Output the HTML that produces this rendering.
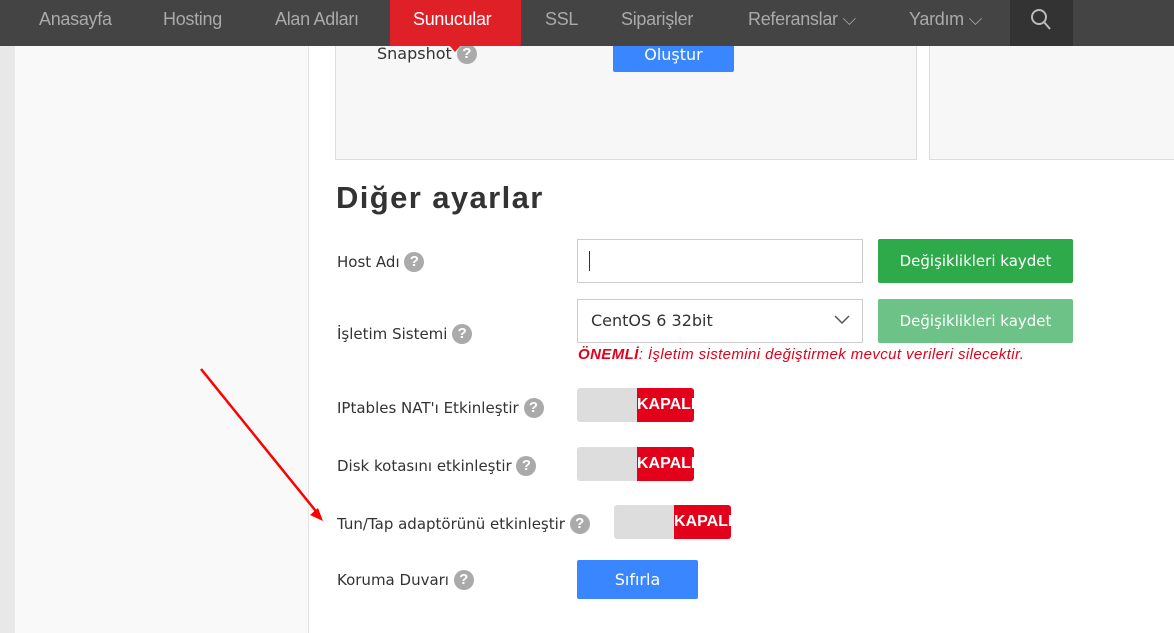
<!DOCTYPE html>
<html><head><meta charset="utf-8"><style>
*{box-sizing:border-box;margin:0;padding:0}
body{width:1174px;height:633px;overflow:hidden;background:#fff;font-family:"Liberation Sans",sans-serif;position:relative;color:#333}
.abs{position:absolute}
.nav{left:0;top:0;width:1174px;height:46px;background:#444}
.nav span{position:absolute;top:9px;font-size:18px;color:#aaa;letter-spacing:-0.3px}
.q{display:inline-block;width:20px;height:20px;border-radius:50%;background:#aaa;color:#fff;font-weight:bold;font-size:15px;text-align:center;line-height:20px;font-family:"Liberation Sans",sans-serif;vertical-align:1px}
.lbl{font-size:15px;color:#333;font-family:"DejaVu Sans",sans-serif}
.tog{width:117px;height:34px;border-radius:3px;overflow:hidden;display:flex}
.tog .a{width:60px;background:#ddd}
.tog .b{flex:1;background:#e2001a;color:#fff;font-weight:bold;font-size:16px;line-height:34px;overflow:hidden;white-space:nowrap}
.btn{color:#fff;font-size:16px;text-align:center;border-radius:2px;font-family:"DejaVu Sans",sans-serif;font-size:15px}
</style></head><body>
<div class="abs" style="left:0;top:0;width:15px;height:633px;background:#e8e8e8"></div>
<div class="abs" style="left:15px;top:0;width:294px;height:633px;background:#f9f9f9;border-right:1px solid #e3e3e3"></div>
<div class="abs" style="left:335px;top:30px;width:582px;height:130px;background:#f7f7f7;border:1px solid #ddd"></div>
<div class="abs" style="left:929px;top:30px;width:260px;height:130px;background:#f7f7f7;border:1px solid #ddd"></div>
<div class="abs lbl" style="left:377px;top:44px;font-size:16px">Snapshot <span class="q" style="background:#aaa">?</span></div>
<div class="abs btn" style="left:613px;top:40px;width:121px;height:32px;background:#3a86ff;line-height:30px;font-size:16px">Oluştur</div>
<div class="abs nav">
<span style="left:39px">Anasayfa</span>
<span style="left:163px">Hosting</span>
<span style="left:275px">Alan Adları</span>
<div class="abs" style="left:390px;top:0;width:131px;height:46px;background:#e02027"></div>
<div class="abs" style="left:448px;top:44px;width:0;height:0;border-left:7px solid transparent;border-right:7px solid transparent;border-top:8px solid #e02027"></div>
<span style="left:413px;color:#fff">Sunucular</span>
<span style="left:545px">SSL</span>
<span style="left:621px">Siparişler</span>
<span style="left:748px">Referanslar ⌵</span>
<span style="left:909px">Yardım ⌵</span>
<div class="abs" style="left:1010px;top:0;width:63px;height:46px;background:#333"></div>
<svg class="abs" style="left:1030px;top:8px" width="22" height="24" viewBox="0 0 22 24"><circle cx="9" cy="9" r="7" fill="none" stroke="#bbb" stroke-width="2"/><path d="M14 14l6 7" stroke="#bbb" stroke-width="2"/></svg>
</div>
<div class="abs" style="left:336px;top:180px;font-size:31px;font-weight:bold;color:#333;letter-spacing:1.4px">Diğer ayarlar</div>
<div class="abs lbl" style="left:337px;top:252px">Host Adı <span class="q">?</span></div>
<div class="abs" style="left:577px;top:239px;width:286px;height:44px;border:1px solid #ccc;background:#fff"><div style="position:absolute;left:11px;top:11px;width:1px;height:20px;background:#333"></div></div>
<div class="abs btn" style="left:878px;top:239px;width:195px;height:44px;background:#2eaa4a;line-height:44px">Değişiklikleri kaydet</div>
<div class="abs lbl" style="left:337px;top:324px">İşletim Sistemi <span class="q">?</span></div>
<div class="abs" style="left:577px;top:299px;width:286px;height:44px;border:1px solid #ccc;background:#fff;font-size:16px;line-height:42px;padding-left:13px;font-family:'DejaVu Sans',sans-serif">CentOS 6 32bit<svg style="position:absolute;right:12px;top:15px" width="16" height="10"><path d="M1 1l7 7 7-7" fill="none" stroke="#555" stroke-width="1.5"/></svg></div>
<div class="abs btn" style="left:878px;top:299px;width:195px;height:44px;background:#6cc287;line-height:44px">Değişiklikleri kaydet</div>
<div class="abs" style="left:578px;top:346px;font-size:15px;font-style:italic;color:#e2001a;letter-spacing:0.4px"><b>ÖNEMLİ</b>: İşletim sistemini değiştirmek mevcut verileri silecektir.</div>
<div class="abs lbl" style="left:337px;top:398px">IPtables NAT'ı Etkinleştir <span class="q">?</span></div>
<div class="abs tog" style="left:577px;top:388px"><div class="a"></div><div class="b">KAPALI</div></div>
<div class="abs lbl" style="left:337px;top:456px">Disk kotasını etkinleştir <span class="q">?</span></div>
<div class="abs tog" style="left:577px;top:447px"><div class="a"></div><div class="b">KAPALI</div></div>
<div class="abs lbl" style="left:337px;top:514px">Tun/Tap adaptörünü etkinleştir <span class="q">?</span></div>
<div class="abs tog" style="left:614px;top:505px"><div class="a"></div><div class="b">KAPALI</div></div>
<div class="abs lbl" style="left:337px;top:570px">Koruma Duvarı <span class="q">?</span></div>
<div class="abs btn" style="left:577px;top:560px;width:121px;height:39px;background:#3a86ff;line-height:39px;font-size:16px">Sıfırla</div>
<svg class="abs" style="left:195px;top:365px" width="135" height="160"><path d="M6 4L124 150" stroke="#f00" stroke-width="2.5"/><path d="M128 156l-13-6 8-7z" fill="#f00"/></svg>
</body></html>
